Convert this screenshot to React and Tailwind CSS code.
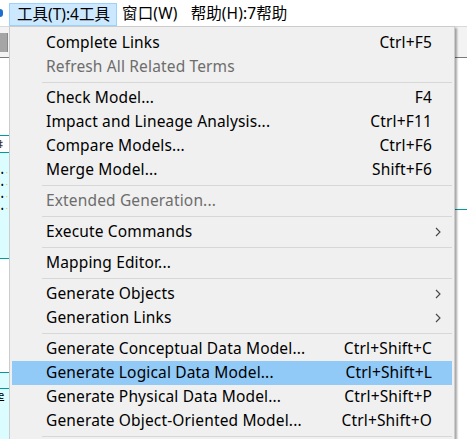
const items = [
  { label: "Complete Links", key: "Ctrl+F5" },
  { label: "Refresh All Related Terms", disabled: true },
  { sep: true },
  { label: "Check Model...", key: "F4" },
  { label: "Impact and Lineage Analysis...", key: "Ctrl+F11" },
  { label: "Compare Models...", key: "Ctrl+F6" },
  { label: "Merge Model...", key: "Shift+F6" },
  { sep: true },
  { label: "Extended Generation...", disabled: true },
  { sep: true },
  { label: "Execute Commands", sub: true },
  { sep: true },
  { label: "Mapping Editor..." },
  { sep: true },
  { label: "Generate Objects", sub: true },
  { label: "Generation Links", sub: true },
  { sep: true },
  { label: "Generate Conceptual Data Model...", key: "Ctrl+Shift+C" },
  { label: "Generate Logical Data Model...", key: "Ctrl+Shift+L", active: true },
  { label: "Generate Physical Data Model...", key: "Ctrl+Shift+P" },
  { label: "Generate Object-Oriented Model...", key: "Ctrl+Shift+O" },
  { sep: true },
];

function Chevron() {
  return (
    <svg width="6" height="10" viewBox="0 0 6 10" className="shrink-0">
      <polyline points="1,1 5,5 1,9" fill="none" stroke="#444" strokeWidth="1.1" />
    </svg>
  );
}

export default function App() {
  return (
    <div className="relative w-[467px] h-[439px] overflow-hidden bg-white text-[15.5px] text-black font-['Noto_Sans','Noto_Sans_CJK_SC',sans-serif]">
      {/* menu bar */}
      <div className="flex h-[26px] items-stretch bg-white">
        <div className="w-[9px] flex items-start pt-[9px]">
          <span className="w-[3px] h-[8px] rounded-r-full bg-[#1a6fd0]" />
        </div>
        <div className="mt-[3px] flex items-center pl-[7px] pr-[6px] bg-[#cce8ff] border border-[#99d1ff]">
          工具(T):4工具
        </div>
        <div className="flex items-center pl-[5px] pr-[13px] pt-[2px] tracking-[0.2px]">窗口(W)</div>
        <div className="flex items-center pt-[2px] tracking-[0.1px]">帮助(H):7帮助</div>
      </div>

      {/* app body behind the menu */}
      <div className="flex h-[32px] border-t border-[#d9d9d9] border-b border-b-[#7a7a7a] bg-[#f3f3f3]">
        <div className="w-[8px] h-[19px] mt-[6px] bg-[#a5a5a5] border-r border-[#888]" />
      </div>
      <div className="relative h-[381px] bg-white">
        {/* diagram nodes peeking out on the left */}
        <div className="absolute left-[-60px] top-[77px] w-[69px] h-[124px] border-t border-[#009c9c] bg-[#dcfdff]">
          <div className="h-[17px] bg-white border-b border-[#009c9c] text-[10px] leading-[16px] text-right pr-[6px]">‡</div>
          <div className="flex flex-col items-end gap-[4px] pr-[1px] pt-[16px] text-[8px] leading-[8px]">
            <span>• <span className="text-[#d8c050]">·</span></span>
            <span>• <span className="text-[#d8c050]">·</span></span>
            <span>• <span className="text-[#d8c050]">·</span></span>
            <span>• <span className="text-[#d8c050]">·</span></span>
          </div>
          <div className="absolute bottom-0 left-0 right-0 border-b border-[#009c9c]" />
        </div>
        <div className="absolute left-[-60px] top-[314px] w-[69px] h-[80px] border-t border-[#009c9c] bg-[#dcfdff]">
          <div className="h-[16px] border-b border-[#009c9c]" />
          <div className="text-[11px] leading-[12px] pl-[58px] underline">e</div>
        </div>
        <div className="absolute left-[455px] top-[151px] w-[20px] border-t border-[#009c9c]" />
      </div>

      {/* dropdown menu */}
      <div className="absolute left-[9px] top-[26px] w-[446px] border border-[#cccccc] bg-[#f0f0f0] px-[2px] pt-[4px] pb-[2px] tracking-[0.15px] shadow-[2px_2px_2px_rgba(0,0,0,0.35)]">
        {items.map((it, i) =>
          it.sep ? (
            <div key={i} className="h-[7px] flex items-center pl-[30px]">
              <div className="h-px w-full bg-[#d7d7d7]" />
            </div>
          ) : (
            <div
              key={i}
              className={
                "flex h-[24px] items-center pl-[34px] pr-[20px] " +
                (it.active ? "bg-[#91c9f7] " : "") +
                (it.disabled ? "text-[#6d6d6d]" : "text-black")
              }
            >
              <span className="flex-1 whitespace-nowrap">{it.label}</span>
              {it.key && <span className="whitespace-nowrap">{it.key}</span>}
              {it.sub && (
                <span className="-mr-[9px]">
                  <Chevron />
                </span>
              )}
            </div>
          )
        )}
      </div>
    </div>
  );
}
